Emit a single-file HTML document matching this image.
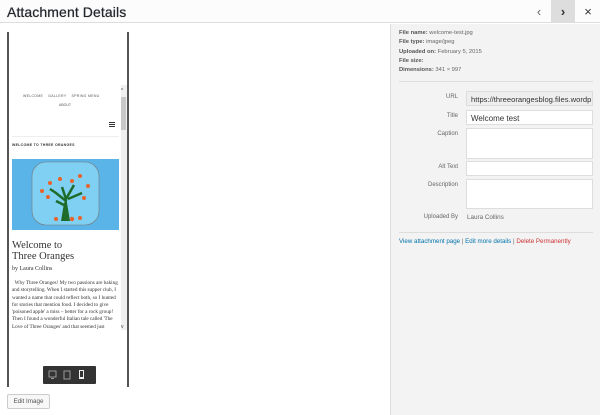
<!DOCTYPE html>
<html><head><meta charset="utf-8"><style>
*{margin:0;padding:0;box-sizing:border-box}
body{width:600px;height:415px;overflow:hidden;background:#fff;font-family:"Liberation Sans",sans-serif;position:relative}
.hdr{position:absolute;left:0;top:0;width:600px;height:23px;background:#fcfcfc;border-bottom:1px solid #ddd}
.hdr h1{position:absolute;left:7px;top:4px;font-size:14px;font-weight:normal;color:#23282d;letter-spacing:.1px;text-shadow:0 0 .6px #23282d}
.nav{position:absolute;top:0;height:23px;width:24px;text-align:center;line-height:23px;font-size:13px;color:#666}
.side{position:absolute;left:390px;top:24px;width:210px;height:391px;background:#f3f3f3;border-left:1px solid #ddd;font-size:6px;color:#666}
.meta{position:absolute;left:8px;top:5px;line-height:9.3px;font-size:5.8px}
.meta b{color:#555}
.hr{position:absolute;left:8px;width:194px;border-top:1px solid #ddd}
.lab{position:absolute;width:67px;text-align:right;font-size:6px;color:#666}
.inp{position:absolute;left:75px;width:127px;background:#fff;border:1px solid #ddd;font-size:8px;color:#333;padding:3px 4px;white-space:nowrap;overflow:hidden}
.links{position:absolute;left:8px;top:214px;font-size:6.2px;color:#0073aa}
.frame{position:absolute;left:7px;top:32px;width:122px;height:355px;background:#fff;border-left:2px solid #555;border-right:2px solid #555}
.sb{position:absolute;left:112px;top:53px;width:6px;height:245px;background:#f0f0f0}
.thumb{position:absolute;left:112px;top:65px;width:5px;height:33px;background:#c8c8c8}
.pc{font-family:"Liberation Serif",serif;color:#333}
.btn{position:absolute;left:7px;top:394px;width:43px;height:15px;border:1px solid #ccc;background:#f7f7f7;font-size:6.3px;color:#555;text-align:center;line-height:13px;border-radius:2px}
</style></head><body>
<div class="hdr"><h1>Attachment Details</h1>
<div class="nav" style="left:527px">&#8249;</div>
<div class="nav" style="left:551px;background:#ddd;color:#333;font-weight:bold">&#8250;</div>
<div class="nav" style="left:576px;color:#333">&#215;</div>
</div>
<div class="frame">
<div style="position:absolute;left:14px;top:62px;font-size:3.5px;letter-spacing:.3px;color:#555;width:100px">WELCOME &nbsp;&nbsp; GALLERY &nbsp;&nbsp; SPRING MENU</div>
<div style="position:absolute;left:50px;top:71px;font-size:3.5px;color:#555">ABOUT</div>
<div style="position:absolute;left:100px;top:90px;width:6px;height:5px;border-top:1px solid #333;border-bottom:1px solid #333"><div style="margin-top:1px;border-top:1px solid #333"></div></div>
<div style="position:absolute;left:3px;top:104px;width:107px;border-top:1px solid #eee"></div>
<div style="position:absolute;left:3px;top:111px;font-size:3.5px;font-weight:bold;color:#333;letter-spacing:.3px">WELCOME TO THREE ORANGES</div>
<svg style="position:absolute;left:3px;top:127px" width="107" height="71" viewBox="0 0 107 71">
<rect width="107" height="71" fill="#5ab4e8"/>
<rect x="20" y="3" width="67" height="63" rx="14" fill="#7fd0f2" stroke="#777" stroke-width=".6"/>
<path d="M52 62 L54 40 L50 28 M54 40 L62 26 M54 42 L44 34 L38 30 M56 40 L70 34 M52 46 L44 42" stroke="#1e6b2a" stroke-width="2.5" fill="none"/>
<path d="M49 62 L58 62 L55 44 L52 44Z" fill="#1e6b2a"/>
<g fill="#e8632a"><circle cx="38" cy="24" r="2"/><circle cx="48" cy="20" r="2"/><circle cx="60" cy="22" r="2"/><circle cx="68" cy="17" r="2"/><circle cx="76" cy="27" r="2"/><circle cx="30" cy="32" r="2"/><circle cx="36" cy="38" r="2"/><circle cx="72" cy="39" r="2"/><circle cx="44" cy="60" r="2"/><circle cx="60" cy="60" r="2.2"/><circle cx="68" cy="59" r="2"/></g>
</svg>
<div class="pc" style="position:absolute;left:3px;top:208px;font-size:10.5px;line-height:11px">Welcome to<br>Three Oranges</div>
<div class="pc" style="position:absolute;left:3px;top:234px;font-size:6px">by Laura Collins</div>
<div class="pc" style="position:absolute;left:3px;top:248px;width:109px;height:51px;overflow:hidden;font-size:5.2px;line-height:7.3px">&nbsp;&nbsp;Why Three Oranges! My two passions are baking and storytelling. When I started this supper club, I wanted a name that could reflect both, so I hunted for stories that mention food. I decided to give 'poisoned apple' a miss – better for a rock group! Then I found a wonderful Italian tale called 'The Love of Three Oranges' and that seemed just</div>
<div class="sb"></div><div class="thumb"></div>
<div style="position:absolute;left:112px;top:56px;font-size:5px;color:#444">^</div>
<div style="position:absolute;left:112px;top:292px;font-size:5px;color:#444">v</div>
<div style="position:absolute;left:34px;top:334px;width:53px;height:18px;background:#333;border-radius:1px">
<svg width="53" height="18"><rect x="6" y="5" width="7" height="6" fill="none" stroke="#999" stroke-width="1"/><rect x="8" y="12" width="3" height="1" fill="#999"/><rect x="21" y="5" width="6" height="8" fill="none" stroke="#999"/><rect x="36" y="4" width="5" height="9" fill="#eee"/><rect x="37" y="5" width="3" height="6" fill="#333"/></svg></div>
</div>
<div class="btn">Edit Image</div>
<div class="side">
<div class="meta"><b>File name:</b> welcome-test.jpg<br><b>File type:</b> image/jpeg<br><b>Uploaded on:</b> February 5, 2015<br><b>File size:</b><br><b>Dimensions:</b> 341 × 997</div>
<div class="hr" style="top:57px"></div>
<div class="lab" style="top:70px">URL</div><div class="inp" style="top:67px;height:15px;background:#eee;font-size:7.6px">https://threeorangesblog.files.wordp</div>
<div class="lab" style="top:89px">Title</div><div class="inp" style="top:86px;height:15px">Welcome test</div>
<div class="lab" style="top:107px">Caption</div><div class="inp" style="top:104px;height:31px"></div>
<div class="lab" style="top:140px">Alt Text</div><div class="inp" style="top:137px;height:15px"></div>
<div class="lab" style="top:158px">Description</div><div class="inp" style="top:155px;height:30px"></div>
<div class="lab" style="top:190px">Uploaded By</div><div style="position:absolute;left:76px;top:190px;font-size:6.3px;color:#666">Laura Collins</div>
<div class="hr" style="top:208px"></div>
<div class="links">View attachment page <span style="color:#666">|</span> Edit more details <span style="color:#666">|</span> <span style="color:#c33">Delete Permanently</span></div>
</div>
</body></html>
